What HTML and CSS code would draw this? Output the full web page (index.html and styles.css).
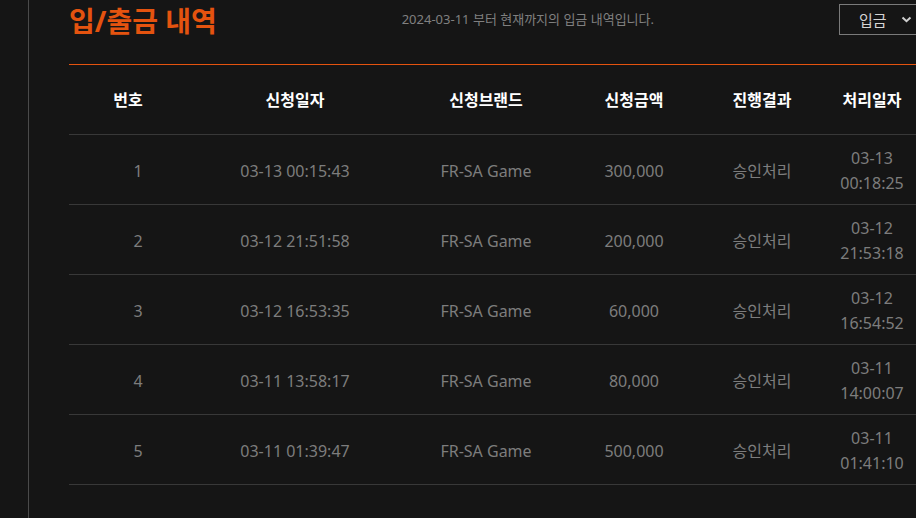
FILE: index.html
```html
<!DOCTYPE html>
<html lang="ko">
<head>
<meta charset="utf-8">
<link rel="stylesheet" href="styles.css">
</head>
<body>
<div class="layout">
  <div class="rail"></div>
  <main class="content">
    <div class="top">
      <h1 class="title">입/출금 내역</h1>
      <p class="subtitle">2024-03-11 부터 현재까지의 입금 내역입니다.</p>
      <div class="select">
        <span>입금</span>
        <svg class="chev" width="11" height="7" viewBox="0 0 11 7"><path d="M1.5 1.5 L5.5 5.2 L9.5 1.5" fill="none" stroke="#cfcfcf" stroke-width="2"/></svg>
      </div>
    </div>
    <table class="list">
      <colgroup>
        <col class="c1"><col class="c2"><col class="c3"><col class="c4"><col class="c5"><col class="c6">
      </colgroup>
      <thead>
        <tr><th>번호</th><th>신청일자</th><th>신청브랜드</th><th>신청금액</th><th>진행결과</th><th>처리일자</th></tr>
      </thead>
      <tbody>
        <tr><td class="num">1</td><td>03-13 00:15:43</td><td>FR-SA Game</td><td>300,000</td><td>승인처리</td><td>03-13<br>00:18:25</td></tr>
        <tr><td class="num">2</td><td>03-12 21:51:58</td><td>FR-SA Game</td><td>200,000</td><td>승인처리</td><td>03-12<br>21:53:18</td></tr>
        <tr><td class="num">3</td><td>03-12 16:53:35</td><td>FR-SA Game</td><td>60,000</td><td>승인처리</td><td>03-12<br>16:54:52</td></tr>
        <tr><td class="num">4</td><td>03-11 13:58:17</td><td>FR-SA Game</td><td>80,000</td><td>승인처리</td><td>03-11<br>14:00:07</td></tr>
        <tr><td class="num">5</td><td>03-11 01:39:47</td><td>FR-SA Game</td><td>500,000</td><td>승인처리</td><td>03-11<br>01:41:10</td></tr>
      </tbody>
    </table>
  </main>
</div>
</body>
</html>
```

FILE: styles.css
```css
html, body {
  margin: 0;
  padding: 0;
  background: #151515;
  overflow: hidden;
}
body {
  font-family: "Noto Sans", "Noto Sans CJK KR", sans-serif;
  color: #7d7d7d;
  width: 916px;
  height: 518px;
}
.layout {
  display: flex;
  height: 518px;
}
.rail {
  width: 28px;
  border-right: 1px solid #4a4a4a;
  flex: none;
}
.content {
  flex: none;
  width: 850px;
  margin-left: 40px;
}
.top {
  display: flex;
  justify-content: space-between;
  align-items: flex-start;
  height: 60px;
  padding-top: 4px;
  border-bottom: 1px solid #e4530f;
}
.title {
  margin: 0;
  font-size: 28px;
  line-height: 34px;
  font-weight: 700;
  color: #e4530f;
}
.subtitle {
  margin: 0;
  font-size: 13px;
  line-height: 30px;
  color: #808080;
}
.select {
  box-sizing: border-box;
  width: 80px;
  height: 31px;
  border: 1px solid #7a7a7a;
  display: flex;
  align-items: center;
  padding-left: 19px;
  gap: 14px;
  font-size: 15px;
  color: #d4d4d4;
}
.chev { display: block; }
.list {
  width: 850px;
  border-collapse: collapse;
  table-layout: fixed;
}
.c1 { width: 118px; }
.c2 { width: 216px; }
.c3 { width: 166px; }
.c4 { width: 130px; }
.c5 { width: 126px; }
.c6 { width: 94px; }
.list th, .list td {
  height: 69px;
  padding: 0;
  text-align: center;
  vertical-align: middle;
  border-bottom: 1px solid #383838;
  font-size: 16px;
}
.list th {
  color: #ffffff;
  font-weight: 700;
  height: 70px;
  padding-bottom: 1px;
  height: 68px;
}
.list td {
  color: #7d7d7d;
  line-height: 25px;
  height: 66px;
  padding-top: 3px;
}
.list td.num {
  padding-left: 20px;
}
```
